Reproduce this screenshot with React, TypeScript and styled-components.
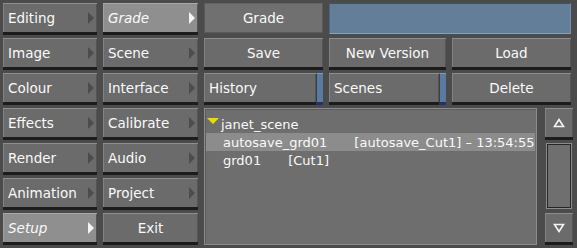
import React from 'react'
import styled, { createGlobalStyle } from 'styled-components'

const GlobalStyle = createGlobalStyle`
  html, body {
    margin: 0;
    padding: 0;
    background: #4b4b4b;
  }
  body {
    width: 577px;
    height: 248px;
    overflow: hidden;
    font-family: "DejaVu Sans", Verdana, sans-serif;
  }
`

const Screen = styled.div`
  display: flex;
  gap: 6px;
  width: 577px;
  height: 248px;
  box-sizing: border-box;
  padding: 3px 0 0 3px;
  background: #4b4b4b;
`

const MenuColumn = styled.div<{ $width: number }>`
  display: grid;
  grid-template-rows: repeat(7, 32px);
  row-gap: 3px;
  width: ${p => p.$width}px;
`

const Workspace = styled.div`
  display: grid;
  grid-template-columns: 119px 117px 119px;
  grid-template-rows: repeat(7, 32px);
  column-gap: 6px;
  row-gap: 3px;
`

interface RaisedProps {
    $selected?: boolean
    $center?: boolean
}

const Raised = styled.div<RaisedProps>`
    display: flex;
    align-items: center;
    justify-content: ${p => p.$center ? 'center' : 'flex-start'};
    box-sizing: border-box;
    height: 32px;
    padding: 0 ${p => p.$center ? '0' : '3px'} 0 ${p => p.$center ? '0' : '5px'};
    background: ${p => p.$selected ? '#8f8f8f' : '#6b6b6b'};
    border-top: 1px solid ${p => p.$selected ? '#a8a8a8' : '#8e8e8e'};
    border-bottom: 3px solid #1c1c1c;
    box-shadow: inset 1px 0 0 ${p => p.$selected ? '#a0a0a0' : '#828282'}, inset -1px 0 0 #555;
    color: #fafafa;
    font-size: 13.5px;
    font-style: ${p => p.$selected ? 'italic' : 'normal'};
    white-space: nowrap;
`

const Arrow = styled.span<{ $selected?: boolean }>`
    margin-left: auto;
    width: 0;
    height: 0;
    border-top: 6px solid transparent;
    border-bottom: 6px solid transparent;
    border-left: 6px solid ${p => p.$selected ? '#f4f4f4' : '#4c4c4c'};
`

const Label = styled.div`
    display: flex;
    align-items: center;
    justify-content: center;
    box-sizing: border-box;
    height: 30px;
    background: #707070;
    border: 1px solid #5a5a5a;
    border-top-color: #626262;
    color: #fafafa;
    font-size: 13.5px;
`

const NameField = styled.div`
    grid-column: span 2;
    box-sizing: border-box;
    height: 31px;
    background: #627e98;
    border-top: 1px solid #3f5264;
    border-left: 1px solid #4f6579;
    border-bottom: 1px solid #8aa0b4;
    border-right: 1px solid #7a92a8;
`

const SliderButton = styled.div`
    display: grid;
    grid-template-columns: 1fr 7px;
`

const Strip = styled.div`
    background: #5a7aa2;
    border-top: 1px solid #7f9cc0;
    border-left: 1px solid #3e3e3e;
    border-bottom: 3px solid #24306a;
`

const Browser = styled.div`
    grid-column: 1 / 4;
    grid-row: 4 / 8;
    display: grid;
    grid-template-columns: 1fr 28px;
    column-gap: 5px;
`

const SceneList = styled.div`
    box-sizing: border-box;
    background: #6e6e6e;
    border: 1px solid #8c8c8c;
    box-shadow: inset 1px 1px 0 #5c5c5c;
    padding: 6px 1px 0 1px;
    color: #fafafa;
    font-size: 13px;
    margin-right: 3px;
`

const ListRow = styled.div<{ $highlight?: boolean; $indent?: number }>`
    display: flex;
    align-items: center;
    height: 18px;
    padding-left: ${p => p.$indent ?? 17}px;
    background: ${p => p.$highlight ? '#8c8c8c' : 'transparent'};
    white-space: nowrap;
`

const Tag = styled.span`
    margin-left: 27px;
`

const OpenMark = styled.span`
    width: 0;
    height: 0;
    margin-right: 2px;
    margin-top: -6px;
    border-left: 6px solid transparent;
    border-right: 6px solid transparent;
    border-top: 6px solid #eadc00;
`

const ScrollBar = styled.div`
    display: grid;
    grid-template-rows: 32px 1fr 32px;
    row-gap: 3px;
`

const ScrollTrack = styled.div`
    box-sizing: border-box;
    margin: 1px 2px 2px 2px;
    background: #6f6f6f;
    border: 1px solid #262626;
    box-shadow: 0 0 0 1px #8c8c8c;
`

const ArrowIcon = ({ down }: { down?: boolean }) => (
    <svg width="12" height="10" viewBox="0 0 12 10">
        <polygon
            points={down ? '1.5,1.5 10.5,1.5 6,8.5' : '6,1.5 10.5,8.5 1.5,8.5'}
            fill="none"
            stroke="#f4f4f4"
            strokeWidth="1.6"
        />
    </svg>
)

const leftMenu = ['Editing', 'Image', 'Colour', 'Effects', 'Render', 'Animation', 'Setup']
const rightMenu = ['Grade', 'Scene', 'Interface', 'Calibrate', 'Audio', 'Project']

export default function App() {
    return (
        <>
            <GlobalStyle />
            <Screen>
                <MenuColumn $width={94}>
                    {leftMenu.map(item => (
                        <Raised key={item} $selected={item === 'Setup'}>
                            {item}
                            <Arrow $selected={item === 'Setup'} />
                        </Raised>
                    ))}
                </MenuColumn>
                <MenuColumn $width={95}>
                    {rightMenu.map(item => (
                        <Raised key={item} $selected={item === 'Grade'}>
                            {item}
                            <Arrow $selected={item === 'Grade'} />
                        </Raised>
                    ))}
                    <Raised $center>Exit</Raised>
                </MenuColumn>
                <Workspace>
                    <Label>Grade</Label>
                    <NameField />
                    <Raised $center>Save</Raised>
                    <Raised $center>New Version</Raised>
                    <Raised $center>Load</Raised>
                    <SliderButton>
                        <Raised>History</Raised>
                        <Strip />
                    </SliderButton>
                    <SliderButton>
                        <Raised>Scenes</Raised>
                        <Strip />
                    </SliderButton>
                    <Raised $center>Delete</Raised>
                    <Browser>
                        <SceneList>
                            <ListRow $indent={1}>
                                <OpenMark />
                                janet_scene
                            </ListRow>
                            <ListRow $highlight>
                                autosave_grd01<Tag>[autosave_Cut1] – 13:54:55</Tag>
                            </ListRow>
                            <ListRow>
                                grd01<Tag>[Cut1]</Tag>
                            </ListRow>
                        </SceneList>
                        <ScrollBar>
                            <Raised $center><ArrowIcon /></Raised>
                            <ScrollTrack />
                            <Raised $center><ArrowIcon down /></Raised>
                        </ScrollBar>
                    </Browser>
                </Workspace>
            </Screen>
        </>
    )
}
